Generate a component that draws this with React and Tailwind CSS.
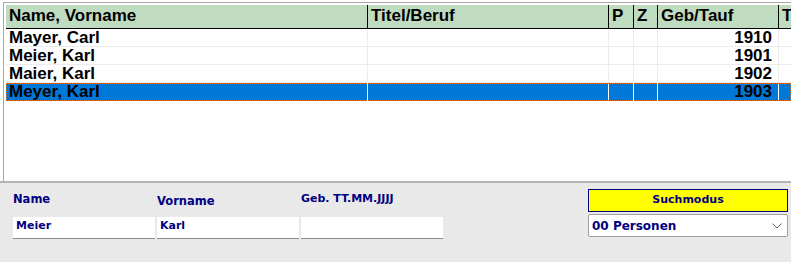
const cols = [
  { label: "Name, Vorname", w: "w-[362px]" },
  { label: "Titel/Beruf", w: "w-[241px]" },
  { label: "P", w: "w-[25px]" },
  { label: "Z", w: "w-[24px]" },
  { label: "Geb/Tauf", w: "w-[121px]" },
];

const rows = [
  { name: "Mayer, Carl", year: "1910" },
  { name: "Meier, Karl", year: "1901" },
  { name: "Maier, Karl", year: "1902" },
  { name: "Meyer, Karl", year: "1903", selected: true },
];

const Row = ({ name, year, selected }) => {
  const line = selected ? "border-white" : "border-[#ececec]";
  return (
    <div
      className={
        "flex h-[18px] text-[17px] font-bold leading-[18px] text-black " +
        (selected ? "bg-[#0078d7] outline-1 outline-dotted outline-[#e8731c] -outline-offset-1" : "border-b border-[#ececec]")
      }
    >
      <div className={"w-[362px] pl-[3px] border-r " + line}>{name}</div>
      <div className={"w-[241px] border-r " + line}></div>
      <div className={"w-[25px] border-r " + line}></div>
      <div className={"w-[24px] border-r " + line}></div>
      <div className={"w-[121px] pr-[6px] text-right border-r " + line}>{year}</div>
      <div className="flex-1"></div>
    </div>
  );
};

const App = () => {
  return (
    <div className="w-[791px] h-[262px] bg-white overflow-hidden font-['Liberation_Sans',Arial,sans-serif]">
      <div className="pt-[2px] pl-[3px] h-[181px]">
        <div className="h-full border-t border-l border-[#a8a8a8] pt-[2px] pl-[2px]">
          <div className="flex h-[24px] bg-[#c0dcc0] border-b border-black text-[17px] font-bold leading-[22px] text-black">
            {cols.map((c) => (
              <div key={c.label} className={c.w + " pl-[3px] border-r border-black whitespace-nowrap"}>
                {c.label}
              </div>
            ))}
            <div className="flex-1 pl-[3px] overflow-hidden">T</div>
          </div>
          {rows.map((r) => (
            <Row key={r.name} {...r} />
          ))}
        </div>
      </div>
      <div className="h-[81px] bg-[#e9e9e9] border-t-2 border-[#b4b4b4] flex text-[#000080] font-bold font-['DejaVu_Sans',Verdana,sans-serif] text-[11.5px]">
        <div className="pl-[13px] pt-[8px] flex flex-col">
          <div className="flex gap-[2px] h-[26px]">
            <div className="w-[142px]">Name</div>
            <div className="w-[142px] pt-[2px]">Vorname</div>
            <div className="w-[142px] text-[11px]">Geb. TT.MM.JJJJ</div>
          </div>
          <div className="flex gap-[2px] text-[11px]">
            <div className="w-[142px] h-[22px] bg-white border-b border-[#8a8a8a] pl-[3px] leading-[18px]">Meier</div>
            <div className="w-[142px] h-[22px] bg-white border-b border-[#8a8a8a] pl-[3px] leading-[18px]">Karl</div>
            <div className="w-[142px] h-[22px] bg-white border-b border-[#8a8a8a]"></div>
          </div>
        </div>
        <div className="ml-auto mr-[3px] pt-[6px] w-[200px] flex flex-col gap-[2px]">
          <div className="h-[23px] bg-[#ffff00] border border-[#000080] text-center leading-[20px] text-[11px]">Suchmodus</div>
          <div className="h-[23px] bg-white border border-[#a0a0a0] rounded-[2px] flex items-center pl-[3px] pr-[5px] text-[12px]">
            <span>00 Personen</span>
            <svg className="ml-auto" width="10" height="6" viewBox="0 0 10 6">
              <path d="M0.5 0.5 L5 5 L9.5 0.5" fill="none" stroke="#606060" strokeWidth="1" />
            </svg>
          </div>
        </div>
      </div>
    </div>
  );
};

export default App;
